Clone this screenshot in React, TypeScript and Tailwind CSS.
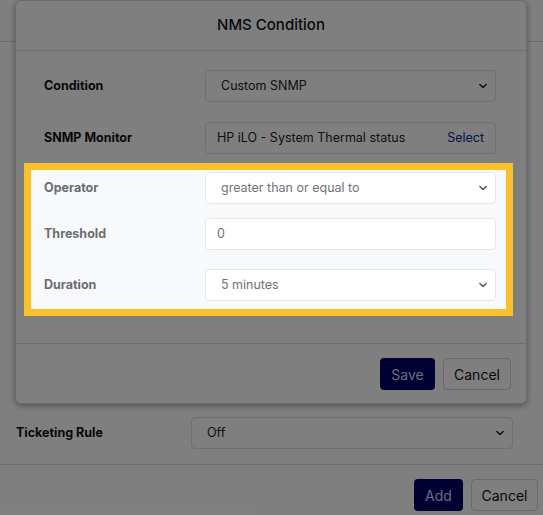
import React from "react";

const font = { fontFamily: "Inter, 'Noto Sans', sans-serif" };

function Chevron({ className = "" }: { className?: string }) {
  return (
    <svg
      viewBox="0 0 16 16"
      className={`pointer-events-none absolute right-[7px] top-1/2 h-[10px] w-[10px] -translate-y-1/2 ${className}`}
      fill="none"
      stroke="currentColor"
      strokeWidth="2.4"
      strokeLinecap="round"
      strokeLinejoin="round"
    >
      <path d="M3 5.5l5 5 5-5" />
    </svg>
  );
}

function FakeSelect({ value, light = false }: { value: string; light?: boolean }) {
  return (
    <div
      className={`relative flex h-[32px] flex-1 items-center rounded-[4px] border bg-white pl-[15px] text-[12.5px] ${
        light ? "border-[#e4e7eb] text-[#6f7378]" : "border-[#dcdfe3] text-[#222]"
      }`}
    >
      {value}
      <Chevron className={light ? "text-[#555]" : "text-[#222]"} />
    </div>
  );
}

function Row({ label, children, light = false, className = "" }: { label: string; children: React.ReactNode; light?: boolean; className?: string }) {
  return (
    <div className={`flex items-center ${className}`}>
      <div className={`w-[161px] text-[12.5px] font-bold ${light ? "text-[#6a6d71]" : "text-[#111]"}`}>{label}</div>
      {children}
    </div>
  );
}

export default function App() {
  return (
    <div className="relative h-[515px] w-full overflow-hidden bg-white" style={font}>
      {/* page header of the dialog underneath */}
      <div className="absolute inset-x-0 top-0 h-[42px] border-b border-[#dcdcdc]" />

      {/* NMS Condition modal */}
      <div className="relative mx-[15px] w-[512px] rounded-[6px] border border-[#d6d6d6] bg-white shadow-[0_2px_6px_rgba(0,0,0,0.35)]">
        <div className="flex h-[50px] items-center justify-center border-b border-[#dedede] text-[15px] font-medium text-[#111]">
          NMS Condition
        </div>
        <div className="pb-[27px] pl-[28px] pr-[30px] pt-[19px]">
          <Row label="Condition">
            <FakeSelect value="Custom SNMP" />
          </Row>
          <Row label="SNMP Monitor" className="mt-[20px]">
            <div className="flex h-[32px] flex-1 items-center justify-between rounded-[4px] border border-[#dcdfe3] bg-white pl-[11px] pr-[11px] text-[12.5px] text-[#222]">
              <span>HP iLO - System Thermal status</span>
              <span className="text-[#0b2d8a]">Select</span>
            </div>
          </Row>

          {/* highlighted section, lifted above the dim overlay */}
          <div className="relative z-30 -ml-[20px] -mr-[17px] mt-[9px] border-[7px] border-[#fbc12d] bg-[#f8f9fb] pb-[8px] pl-[13px] pr-[10px] pt-[2px]">
            <Row label="Operator" light>
              <FakeSelect value="greater than or equal to" light />
            </Row>
            <Row label="Threshold" light className="mt-[14px]">
              <div className="flex h-[32px] flex-1 items-center rounded-[4px] border border-[#e4e7eb] bg-white pl-[11px] text-[12.5px] text-[#6f7378]">
                0
              </div>
            </Row>
            <Row label="Duration" light className="mt-[19px]">
              <FakeSelect value="5 minutes" light />
            </Row>
          </div>
        </div>
        <div className="flex justify-end gap-[8px] border-t border-[#dedede] pb-[13px] pr-[15px] pt-[14px]">
          <button className="h-[32px] w-[55px] rounded-[4px] bg-[#000066] text-[14px] text-[#cfdcff]">Save</button>
          <button className="h-[32px] w-[68px] rounded-[4px] border border-[#d4d4d4] bg-white text-[14px] text-[#111]">Cancel</button>
        </div>
      </div>

      <div className="flex items-center pb-[15px] pl-[16px] pr-[30px] pt-[13px]">
        <div className="w-[175px] text-[12.5px] font-bold text-[#111]">Ticketing Rule</div>
        <FakeSelect value="Off" />
      </div>
      <div className="flex justify-end gap-[8px] border-t border-[#dcdcdc] pr-[5px] pt-[14px]">
        <button className="h-[32px] w-[49px] rounded-[4px] bg-[#000066] text-[14px] text-[#cfdcff]">Add</button>
        <button className="h-[32px] w-[67px] rounded-[4px] border border-[#d4d4d4] bg-white text-[14px] text-[#111]">Cancel</button>
      </div>

      {/* dim overlay */}
      <div className="absolute inset-0 z-20 bg-black/50" />
    </div>
  );
}
